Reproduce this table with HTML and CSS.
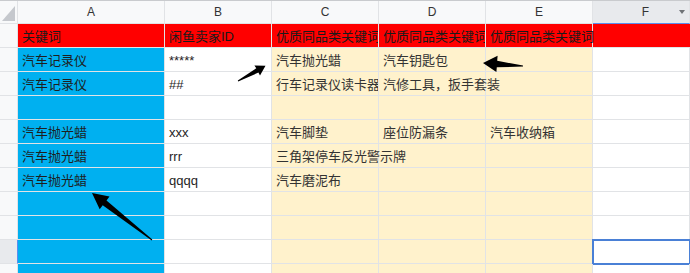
FILE: index.html
```html
<!DOCTYPE html>
<html lang="zh-CN">
<head>
    <meta charset="UTF-8">
    <meta name="viewport" content="width=device-width, initial-scale=1.0">
    <title>关键词表</title>
    <link rel="stylesheet" href="styles.css">
</head>
<body>
    <div class="sheet">
        <div class="row col-head">
            <div class="cell corner">
                <svg width="17" height="22" viewBox="0 0 17 22"><polygon points="15,5 15,20 2,20" fill="#c5c8cd"/></svg>
            </div>
            <div class="cell">A</div>
            <div class="cell">B</div>
            <div class="cell">C</div>
            <div class="cell">D</div>
            <div class="cell">E</div>
            <div class="cell picked"><span class="letter">F</span><span class="drop"></span></div>
        </div>

        <div class="row title-row">
            <div class="cell rh"></div>
            <div class="cell">关键词</div>
            <div class="cell">闲鱼卖家ID</div>
            <div class="cell clip">优质同品类关键词</div>
            <div class="cell clip">优质同品类关键词</div>
            <div class="cell"><span class="spill">优质同品类关键词</span></div>
            <div class="cell tail"></div>
        </div>

        <div class="row">
            <div class="cell rh"></div>
            <div class="cell key">汽车记录仪</div>
            <div class="cell">*****</div>
            <div class="cell alt">汽车抛光蜡</div>
            <div class="cell alt">汽车钥匙包</div>
            <div class="cell alt"></div>
            <div class="cell"></div>
        </div>

        <div class="row">
            <div class="cell rh"></div>
            <div class="cell key">汽车记录仪</div>
            <div class="cell">##</div>
            <div class="cell alt clip">行车记录仪读卡器</div>
            <div class="cell alt"><span class="spill">汽修工具，扳手套装</span></div>
            <div class="cell alt"></div>
            <div class="cell"></div>
        </div>

        <div class="row">
            <div class="cell rh"></div>
            <div class="cell key"></div>
            <div class="cell"></div>
            <div class="cell alt"></div>
            <div class="cell alt"></div>
            <div class="cell alt"></div>
            <div class="cell"></div>
        </div>

        <div class="row">
            <div class="cell rh"></div>
            <div class="cell key">汽车抛光蜡</div>
            <div class="cell">xxx</div>
            <div class="cell alt">汽车脚垫</div>
            <div class="cell alt">座位防漏条</div>
            <div class="cell alt">汽车收纳箱</div>
            <div class="cell"></div>
        </div>

        <div class="row">
            <div class="cell rh"></div>
            <div class="cell key">汽车抛光蜡</div>
            <div class="cell">rrr</div>
            <div class="cell alt"><span class="spill">三角架停车反光警示牌</span></div>
            <div class="cell alt"></div>
            <div class="cell alt"></div>
            <div class="cell"></div>
        </div>

        <div class="row">
            <div class="cell rh"></div>
            <div class="cell key">汽车抛光蜡</div>
            <div class="cell">qqqq</div>
            <div class="cell alt">汽车磨泥布</div>
            <div class="cell alt"></div>
            <div class="cell alt"></div>
            <div class="cell"></div>
        </div>

        <div class="row">
            <div class="cell rh"></div>
            <div class="cell key"></div>
            <div class="cell"></div>
            <div class="cell alt"></div>
            <div class="cell alt"></div>
            <div class="cell alt"></div>
            <div class="cell"></div>
        </div>

        <div class="row">
            <div class="cell rh"></div>
            <div class="cell key"></div>
            <div class="cell"></div>
            <div class="cell alt"></div>
            <div class="cell alt"></div>
            <div class="cell alt"></div>
            <div class="cell"></div>
        </div>

        <div class="row">
            <div class="cell rh picked"></div>
            <div class="cell key"></div>
            <div class="cell"></div>
            <div class="cell alt"></div>
            <div class="cell alt"></div>
            <div class="cell alt"></div>
            <div class="cell active"></div>
        </div>

        <div class="row">
            <div class="cell rh"></div>
            <div class="cell key"></div>
            <div class="cell"></div>
            <div class="cell alt"></div>
            <div class="cell alt"></div>
            <div class="cell alt"></div>
            <div class="cell"></div>
        </div>

        <!-- hand-drawn pointer arrows on top of the grid -->
        <svg class="marks" width="690" height="273" viewBox="0 0 690 273">
            <rect x="595" y="24" width="95" height="23" fill="#ff0000"/>
            <polygon points="237.8,80.6 256.3,68.3 254.4,65.4 265.5,65.7 260,75.4 258.4,72.6 238.2,81.4" fill="#000"/>
            <polygon points="523,65.5 497.2,60.8 497.6,55.8 483,63 496.4,72 496.8,67.3 523,66.5" fill="#000"/>
            <polygon points="152.3,239.6 106.5,200.5 109.5,196.6 92,193 99.7,209.2 102.7,205.3 151.7,240.4" fill="#000"/>
        </svg>
    </div>
</body>
</html>
```

FILE: styles.css
```css
* {
    box-sizing: border-box;
}

body {
    margin: 0;
    background-color: #fff;
    font-family: "Liberation Sans", "Noto Sans CJK SC", sans-serif;
    font-size: 13px;
    color: #1e1e1e;
}

.sheet {
    position: relative;
    width: 690px;
    height: 273px;
    overflow: hidden;
    border-top: 1px solid #c9cbce;
}

.row {
    display: flex;
    height: 24px;
}

.cell {
    flex: none;
    width: 107px;
    padding: 3px 4px 0;
    border-right: 1px solid #e1e3e6;
    border-bottom: 1px solid #e1e3e6;
    white-space: nowrap;
    line-height: 20px;
}

.cell:first-child {
    width: 18px;
}

.cell:nth-child(2) {
    width: 147px;
}

.cell:last-child {
    flex: 1;
    width: auto;
}

.clip {
    overflow: hidden;
}

/* text that runs on over the empty cells to its right */
.spill {
    position: relative;
    z-index: 1;
}

/* column letters */
.col-head {
    height: 23px;
}

.col-head .cell {
    padding: 0;
    background-color: #f8f9fa;
    color: #333;
    font-size: 12px;
    line-height: 22px;
    text-align: center;
}

.col-head .corner {
    line-height: 0;
}

.col-head .picked {
    display: flex;
    align-items: center;
    padding-left: 19px;
    background-color: #e8eaed;
    border-bottom-color: #5b8def;
}

.letter {
    flex: 1;
}

.drop {
    margin-right: 4px;
    border-left: 3px solid transparent;
    border-right: 3px solid transparent;
    border-top: 4px solid #6f7276;
}

/* row headers */
.rh {
    background-color: #f8f9fa;
}

.rh.picked {
    background-color: #e8eaed;
    border-right-color: #5b8def;
}

.title-row .cell {
    background-color: #ff0000;
    color: #1a1a1a;
}

.title-row .rh {
    background-color: #f8f9fa;
}

.key {
    background-color: #00b0f0;
}

.alt {
    background-color: #fff2cc;
    color: #333;
}

.active {
    outline: 2px solid #4a80d6;
    outline-offset: -1px;
}

.marks {
    position: absolute;
    left: 0;
    top: -1px;
    pointer-events: none;
}
```
